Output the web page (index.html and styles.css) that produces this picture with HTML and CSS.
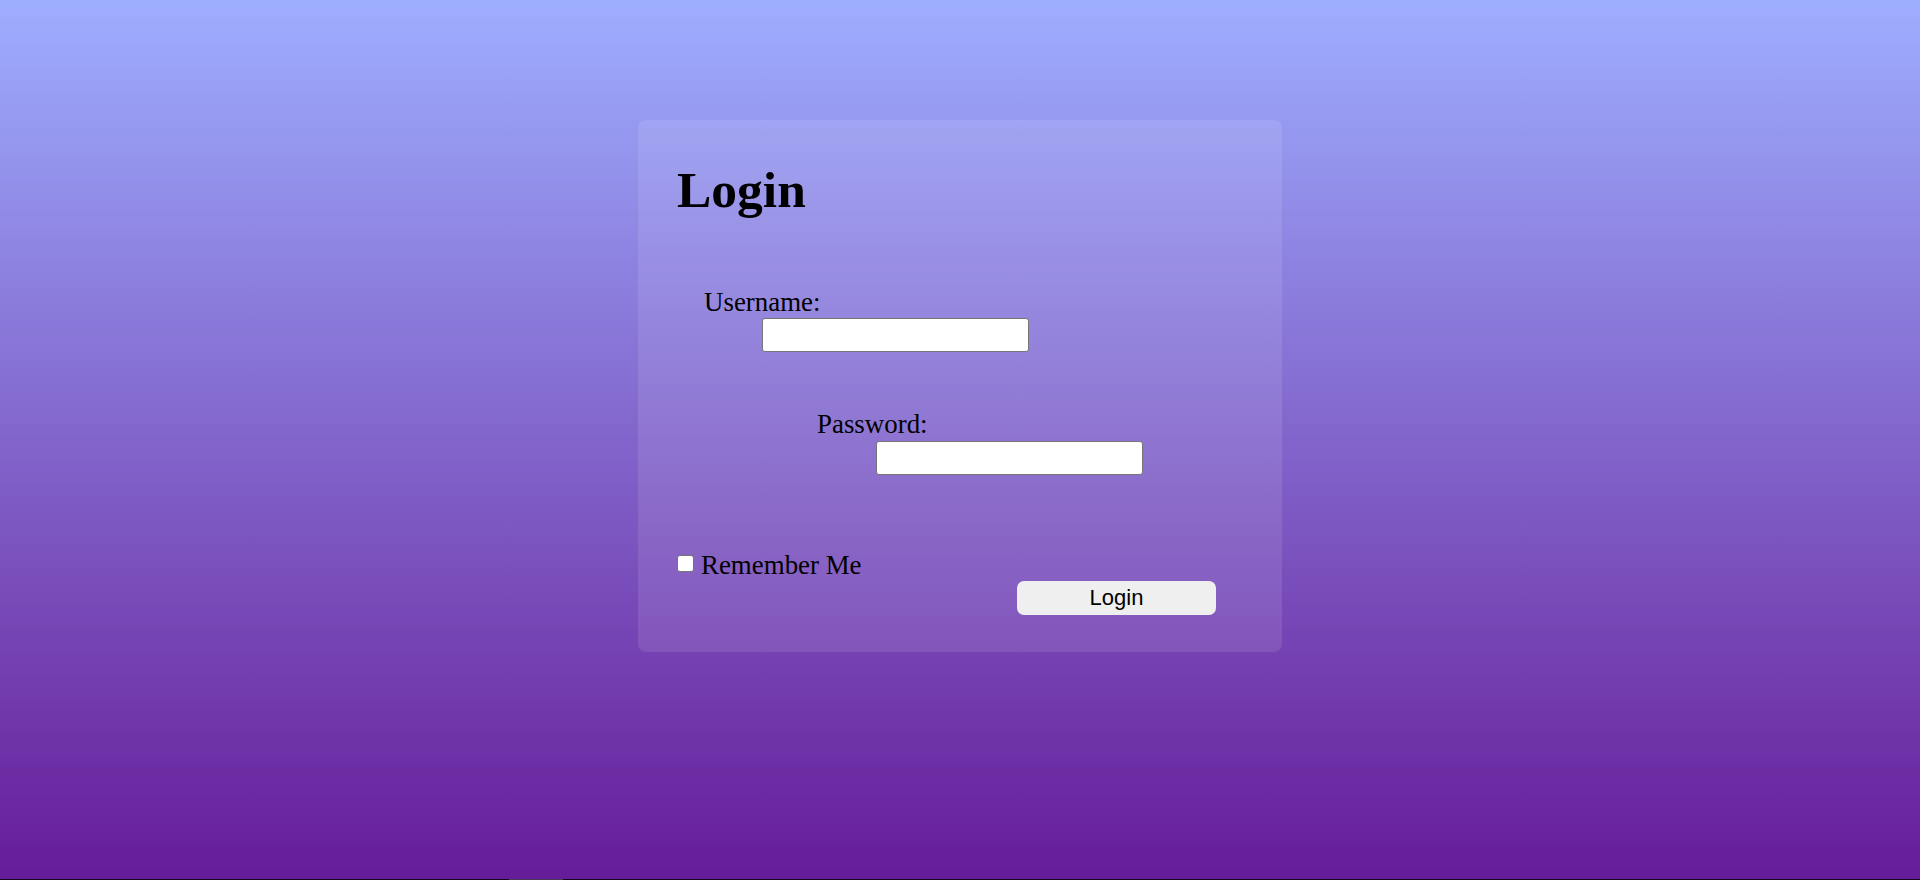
FILE: index.html
```html
<!DOCTYPE html>
<html lang="en">
<head>
<meta charset="utf-8">
<title>Login</title>
<link rel="stylesheet" href="styles.css">
</head>
<body>
<div class="page">
  <form class="card">
    <h1 class="title">Login</h1>
    <div class="field field-user">
      <label class="field-label" for="username">Username:</label>
      <input class="field-input" type="text" id="username">
    </div>
    <div class="field field-pass">
      <label class="field-label" for="password">Password:</label>
      <input class="field-input" type="password" id="password">
    </div>
    <label class="remember">
      <input class="remember-box" type="checkbox">
      <span class="remember-text">Remember Me</span>
    </label>
    <button class="submit" type="button">Login</button>
  </form>
</div>
<div class="bottom-line"><div class="bottom-thumb"></div></div>
</body>
</html>
```
FILE: styles.css
```css
html, body {
  margin: 0;
  padding: 0;
}
body {
  background: #140a1c;
  font-family: "Liberation Serif", "Times New Roman", serif;
  color: #000;
}
.page {
  height: 879px;
  box-sizing: border-box;
  padding-top: 120px;
  background: linear-gradient(to bottom, #9eaeff 0%, #661c98 100%);
}
.card {
  width: 644px;
  box-sizing: border-box;
  margin: 0 auto;
  padding: 39px 0 37px 39px;
  background: rgba(255, 255, 255, 0.1);
  border-radius: 8px;
  display: flex;
  flex-direction: column;
  align-items: flex-start;
}
.title {
  margin: 0;
  font-size: 51.5px;
  line-height: 61px;
  font-weight: bold;
}
.field {
  display: flex;
  flex-direction: column;
  align-items: flex-start;
}
.field-label {
  font-size: 26.9px;
  line-height: 30px;
}
.field-input {
  box-sizing: border-box;
  width: 267px;
  height: 34px;
  margin: 0;
  padding: 2px 4px;
  background: #fff;
  border: 1px solid #767676;
  border-radius: 3px;
  font-family: "Liberation Sans", Arial, sans-serif;
  font-size: 22px;
}
.field-user {
  margin-top: 67px;
}
.field-user .field-label {
  margin-left: 27px;
}
.field-user .field-input {
  margin-top: 1px;
  margin-left: 85px;
}
.field-pass {
  margin-top: 57px;
}
.field-pass .field-label {
  margin-left: 140px;
}
.field-pass .field-input {
  margin-top: 2px;
  margin-left: 199px;
}
.remember {
  margin-top: 75px;
  display: flex;
  align-items: flex-start;
  font-size: 26.9px;
  line-height: 30px;
}
.remember-box {
  width: 17px;
  height: 17px;
  margin: 5px 7px 0 0;
  appearance: none;
  -webkit-appearance: none;
  background: #fff;
  border: 1px solid #767676;
  border-radius: 3px;
  box-sizing: border-box;
}
.submit {
  margin-top: 1px;
  margin-left: 340px;
  width: 199px;
  height: 34px;
  padding: 0;
  border: none;
  border-radius: 7px;
  background: #efefef;
  color: #000;
  font-family: "Liberation Sans", Arial, sans-serif;
  font-size: 22px;
  line-height: 34px;
}
.bottom-line {
  height: 1px;
  background: #140a1c;
  display: flex;
}
.bottom-thumb {
  margin-left: 509px;
  width: 54px;
  background: #4a3a55;
}
```
